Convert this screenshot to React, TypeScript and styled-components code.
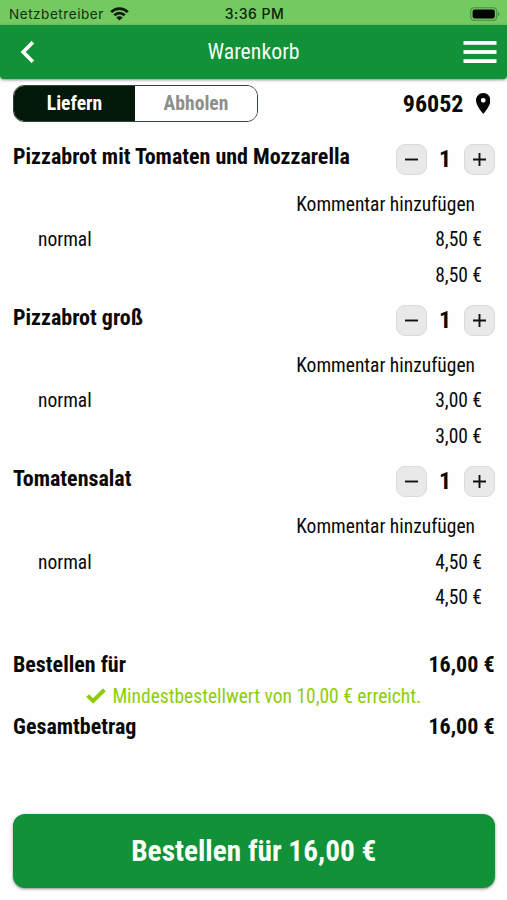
import React, { useState } from "react";
import styled, { createGlobalStyle } from "styled-components";

const GlobalStyle = createGlobalStyle`
  * { box-sizing: border-box; }
  body {
    margin: 0;
    background: #fefefe;
    color: #090909;
    font-family: "Roboto Condensed", Roboto, sans-serif;
    font-stretch: 75%;
    font-size: 19.5px;
  }
  button {
    font: inherit;
    color: inherit;
    border: 0;
    padding: 0;
    background: none;
    cursor: pointer;
  }
  svg { display: block; }
`;

const Screen = styled.div`
  width: 507px;
  height: 900px;
  display: flex;
  flex-direction: column;
  overflow: hidden;
`;

const StatusBar = styled.div`
  height: 25px;
  flex: none;
  display: grid;
  grid-template-columns: 1fr auto 1fr;
  align-items: center;
  padding: 2px 7px 0 9px;
  background: #72ca60;
  color: #12300e;
  font-family: Inter, sans-serif;
  font-stretch: 100%;
  font-size: 13.5px;
`;

const Carrier = styled.div`
  display: flex;
  align-items: center;
  gap: 6px;
  letter-spacing: 0.55px;
`;

const Clock = styled.div`
  font-weight: 500;
  font-size: 14px;
  letter-spacing: 0.5px;
  color: #0d220a;
`;

const Battery = styled.div`
  justify-self: end;
`;

const Header = styled.header`
  height: 54px;
  flex: none;
  display: grid;
  grid-template-columns: 1fr auto 1fr;
  align-items: center;
  padding: 0 10px;
  background: #119138;
  color: #f4fff4;
  border-radius: 0 0 4px 4px;
  box-shadow: 0 1px 3px rgba(0, 0, 0, 0.45);
`;

const Title = styled.h1`
  margin: 0;
  font-size: 21.8px;
  font-weight: 400;
  line-height: 26px;
`;

const BackButton = styled.button`
  justify-self: start;
  padding-left: 10px;
`;

const MenuButton = styled.button`
  justify-self: end;
`;

const Content = styled.main`
  flex: 1;
  display: flex;
  flex-direction: column;
  padding: 6px 12.5px 12px 13px;
`;

const Toolbar = styled.div`
  display: flex;
  justify-content: space-between;
  align-items: center;
  height: 37px;
  margin-bottom: 9.6px;
`;

const Segments = styled.div`
  display: grid;
  grid-template-columns: 121px 1fr;
  width: 245px;
  height: 37px;
  border: 1px solid #34463a;
  border-radius: 11px;
  overflow: hidden;
`;

const Segment = styled.button<{ $active: boolean }>`
  font-weight: 700;
  font-size: 19.6px;
  padding-bottom: 1px;
  background: ${(p) => (p.$active ? "#02190a" : "#fefefe")};
  color: ${(p) => (p.$active ? "#ffffff" : "#8d8f8d")};
`;

const PostalCode = styled.div`
  display: flex;
  align-items: center;
  gap: 12px;
  padding-right: 4.5px;
  font-size: 24px;
  font-weight: 700;
  line-height: 28px;
`;

const Item = styled.section`
  display: grid;
  grid-template-rows: 54.9px repeat(3, 35.45px);
  align-items: center;
`;

const ItemHead = styled.div`
  display: flex;
  justify-content: space-between;
  align-items: center;
`;

const ItemName = styled.h2`
  margin: 0;
  padding-bottom: 4.4px;
  font-size: 22px;
  font-weight: 700;
  line-height: 26px;
`;

const Stepper = styled.div`
  display: grid;
  grid-template-columns: 31px 37px 31px;
  align-items: center;
`;

const StepButton = styled.button`
  display: flex;
  align-items: center;
  justify-content: center;
  width: 31px;
  height: 31px;
  border: 1px solid #dadada;
  border-radius: 9px;
  background: #e9e9e9;
`;

const Quantity = styled.span`
  text-align: center;
  font-size: 24px;
  font-weight: 700;
  line-height: 28px;
`;

const CommentButton = styled.button`
  justify-self: end;
  margin-right: 19.5px;
`;

const OptionRow = styled.div`
  display: flex;
  justify-content: space-between;
  padding: 0 12.5px 0 25px;
`;

const ItemTotal = styled.div`
  justify-self: end;
  padding-right: 12.5px;
`;

const Summary = styled.div`
  display: grid;
  grid-auto-rows: 31.3px;
  align-items: center;
  margin-top: 34px;
`;

const SummaryRow = styled.div`
  display: flex;
  justify-content: space-between;
  font-size: 22px;
  font-weight: 700;
  line-height: 26px;
`;

const MinimumNote = styled.div`
  display: flex;
  align-items: center;
  justify-content: center;
  gap: 6px;
  color: #8fcd0c;
`;

const OrderButton = styled.button`
  height: 74px;
  margin-top: auto;
  border-radius: 12px;
  background: #119138;
  color: #f8fff8;
  font-size: 29.3px;
  font-weight: 700;
  box-shadow: 0 1px 3px rgba(0, 0, 0, 0.45);
`;

const WifiIcon = () => (
  <svg width="19" height="14" viewBox="0 0 19 14" fill="none" stroke="#0b1d08" strokeWidth="2.7">
    <path d="M1.2 5.1C5.8.5 13.2.5 17.8 5.1" />
    <path d="M4.3 8.3c2.9-2.9 7.5-2.9 10.4 0" />
    <path d="M9.5 13.6 6.3 10.4c1.8-1.6 4.6-1.6 6.4 0z" fill="#0b1d08" stroke="none" />
  </svg>
);

const BatteryIcon = () => (
  <svg width="30" height="14" viewBox="0 0 30 14">
    <rect x="0.7" y="0.7" width="26" height="12.6" rx="3.6" fill="none" stroke="#4d8a42" strokeWidth="1.1" />
    <rect x="2.6" y="2.6" width="22.2" height="8.8" rx="1.8" fill="#020402" />
    <path d="M28 4.8c1.8.5 1.8 3.9 0 4.4z" fill="#4d8a42" />
  </svg>
);

const BackIcon = () => (
  <svg width="15" height="22" viewBox="0 0 15 22" fill="none" stroke="#fff" strokeWidth="3.7">
    <path d="M12.9 1.3 3.2 11l9.7 9.7" />
  </svg>
);

const MenuIcon = () => (
  <svg width="34" height="24" viewBox="0 0 34 24" fill="#fff">
    <rect x="0.5" y="1" width="33" height="3.8" />
    <rect x="0.5" y="10.1" width="33" height="3.8" />
    <rect x="0.5" y="19.2" width="33" height="3.8" />
  </svg>
);

const PinIcon = () => (
  <svg width="14.5" height="21" viewBox="5 2 14 20" preserveAspectRatio="none" fill="#050505">
    <path d="M12 2C8.13 2 5 5.13 5 9c0 5.25 7 13 7 13s7-7.75 7-13c0-3.87-3.13-7-7-7zm0 9.3a2.3 2.3 0 1 1 0-4.6 2.3 2.3 0 0 1 0 4.6z" />
  </svg>
);

const StepIcon = ({ plus }: { plus?: boolean }) => (
  <svg width="15" height="15" viewBox="0 0 15 15" fill="none" stroke="#111" strokeWidth="1.9">
    <path d={plus ? "M1 7.5h13M7.5 1v13" : "M1 7.5h13"} />
  </svg>
);

const CheckIcon = () => (
  <svg width="20" height="16" viewBox="0 0 20 16" fill="none" stroke="#8fcd0c" strokeWidth="4">
    <path d="M1.6 7.6 7.1 12.9 18.4 1.8" />
  </svg>
);

const euro = (value: number) => `${value.toFixed(2).replace(".", ",")} €`;

const items = [
  { name: "Pizzabrot mit Tomaten und Mozzarella", price: 8.5 },
  { name: "Pizzabrot groß", price: 3 },
  { name: "Tomatensalat", price: 4.5 },
];

export default function App() {
  const [mode, setMode] = useState("Liefern");
  const [counts, setCounts] = useState([1, 1, 1]);
  const total = items.reduce((sum, item, i) => sum + item.price * counts[i], 0);
  const change = (index: number, delta: number) =>
    setCounts(counts.map((n, i) => (i === index ? Math.max(0, n + delta) : n)));

  return (
    <Screen>
      <GlobalStyle />
      <StatusBar>
        <Carrier>
          Netzbetreiber <WifiIcon />
        </Carrier>
        <Clock>3:36 PM</Clock>
        <Battery>
          <BatteryIcon />
        </Battery>
      </StatusBar>
      <Header>
        <BackButton aria-label="Zurück">
          <BackIcon />
        </BackButton>
        <Title>Warenkorb</Title>
        <MenuButton aria-label="Menü">
          <MenuIcon />
        </MenuButton>
      </Header>
      <Content>
        <Toolbar>
          <Segments>
            {["Liefern", "Abholen"].map((label) => (
              <Segment key={label} $active={mode === label} onClick={() => setMode(label)}>
                {label}
              </Segment>
            ))}
          </Segments>
          <PostalCode>
            96052 <PinIcon />
          </PostalCode>
        </Toolbar>
        {items.map((item, i) => (
          <Item key={item.name}>
            <ItemHead>
              <ItemName>{item.name}</ItemName>
              <Stepper>
                <StepButton aria-label="Weniger" onClick={() => change(i, -1)}>
                  <StepIcon />
                </StepButton>
                <Quantity>{counts[i]}</Quantity>
                <StepButton aria-label="Mehr" onClick={() => change(i, 1)}>
                  <StepIcon plus />
                </StepButton>
              </Stepper>
            </ItemHead>
            <CommentButton>Kommentar hinzufügen</CommentButton>
            <OptionRow>
              <span>normal</span>
              <span>{euro(item.price)}</span>
            </OptionRow>
            <ItemTotal>{euro(item.price * counts[i])}</ItemTotal>
          </Item>
        ))}
        <Summary>
          <SummaryRow>
            <span>Bestellen für</span>
            <span>{euro(total)}</span>
          </SummaryRow>
          <MinimumNote>
            <CheckIcon />
            Mindestbestellwert von 10,00 € erreicht.
          </MinimumNote>
          <SummaryRow>
            <span>Gesamtbetrag</span>
            <span>{euro(total)}</span>
          </SummaryRow>
        </Summary>
        <OrderButton>Bestellen für {euro(total)}</OrderButton>
      </Content>
    </Screen>
  );
}
